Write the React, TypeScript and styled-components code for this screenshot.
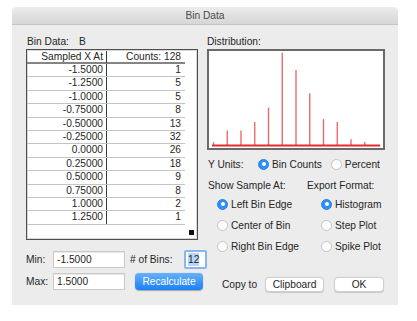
import React from "react";
import styled, { createGlobalStyle } from "styled-components";

const GlobalStyle = createGlobalStyle`
    body {
        margin: 0;
        background: #ffffff;
        font-family: "Liberation Sans", Arial, sans-serif;
        font-size: 10.2px;
        color: #262626;
    }
`;

const Page = styled.div`
    padding: 7px 0 0 12px;
`;

const Window = styled.div`
    width: 386px;
    height: 298px;
    background: #ececec;
    border-radius: 5px 5px 0 0;
    box-sizing: border-box;
    display: flex;
    flex-direction: column;
`;

const TitleBar = styled.div`
    height: 17px;
    flex: 0 0 17px;
    border-radius: 5px 5px 0 0;
    background: linear-gradient(#ececec, #d6d6d6);
    border-bottom: 1px solid #c4c4c4;
    display: flex;
    align-items: center;
    justify-content: center;
    color: #4a4a4a;
`;

const Body = styled.div`
    display: flex;
    padding: 10px 0 0 14px;
`;

const Column = styled.div<{ $width: number }>`
    width: ${(p) => p.$width}px;
    display: flex;
    flex-direction: column;
`;

const Label = styled.div<{ $gap?: number }>`
    height: 14px;
    line-height: 13px;
    margin-left: ${(p) => p.$gap ?? 1}px;
`;

const BinName = styled.span`
    margin-left: 10px;
`;

const Table = styled.div`
    width: 172px;
    height: 191px;
    box-sizing: border-box;
    border: 1px solid #4f4f4f;
    box-shadow: inset 0 0 0 1px #d8d8d8;
    background: #ffffff;
    position: relative;
`;

const Row = styled.div<{ $header?: boolean }>`
    display: grid;
    grid-template-columns: 80px 77px;
    height: ${(p) => (p.$header ? 11 : 12.4)}px;
    border-bottom: ${(p) => (p.$header ? "2px solid #858585" : "1px solid #c4c4c4")};
    width: 158px;
    padding-top: ${(p) => (p.$header ? 1 : 0)}px;
`;

const Cell = styled.div<{ $first?: boolean }>`
    text-align: right;
    padding-right: 3px;
    line-height: 12.4px;
    border-right: ${(p) => (p.$first ? "1px solid #3a3a3a" : "none")};
    white-space: nowrap;
`;

const Corner = styled.div`
    position: absolute;
    right: 3px;
    bottom: 4px;
    width: 5px;
    height: 5px;
    background: #111;
`;

const FormRow = styled.div<{ $top: number }>`
    display: flex;
    align-items: center;
    margin-top: ${(p) => p.$top}px;
    height: 18px;
`;

const FieldLabel = styled.span<{ $width: number; $left?: number }>`
    width: ${(p) => p.$width}px;
    margin-left: ${(p) => p.$left ?? 0}px;
    flex: none;
`;

const Input = styled.div<{ $width: number }>`
    width: ${(p) => p.$width}px;
    height: 17px;
    box-sizing: border-box;
    background: #fff;
    border: 1px solid #c9c9c9;
    box-shadow: inset 0 1px 0 #e8e8e8;
    padding-left: 3px;
    line-height: 15px;
    flex: none;
`;

const FocusInput = styled.div`
    width: 25px;
    height: 19px;
    box-sizing: border-box;
    margin-left: 7px;
    border: 2px solid #86b5ef;
    border-radius: 2px;
    background: #fff;
    padding: 1px 0 0 2px;
`;

const Selected = styled.span`
    background: #b5d5fd;
    line-height: 13px;
    display: inline-block;
`;

const BlueButton = styled.div`
    width: 68px;
    height: 17px;
    margin-left: 10px;
    border-radius: 4px;
    background: linear-gradient(#69b1fa, #1a7ff6);
    color: #fff;
    display: flex;
    align-items: center;
    justify-content: center;
    box-shadow: 0 0.5px 1px rgba(0, 0, 0, 0.3);
`;

const Button = styled.div<{ $width: number; $left?: number }>`
    width: ${(p) => p.$width}px;
    margin-left: ${(p) => p.$left ?? 0}px;
    height: 15px;
    box-sizing: border-box;
    border-radius: 4px;
    background: #fff;
    border: 1px solid #cfcfcf;
    box-shadow: 0 0.5px 1px rgba(0, 0, 0, 0.15);
    display: flex;
    align-items: center;
    justify-content: center;
`;

const Chart = styled.div`
    width: 178px;
    height: 101px;
    box-sizing: border-box;
    border: 2px solid #6a6a6a;
    background: #fff;
`;

const RadioRow = styled.div<{ $top: number }>`
    display: flex;
    align-items: center;
    height: 14px;
    margin-top: ${(p) => p.$top}px;
`;

const Radio = styled.span<{ $on?: boolean }>`
    width: 11px;
    height: 11px;
    box-sizing: border-box;
    border-radius: 50%;
    flex: none;
    margin-right: 3px;
    background: ${(p) => (p.$on ? "#2f8ff8" : "#fff")};
    border: 1px solid ${(p) => (p.$on ? "#2a84ee" : "#c2c2c2")};
    display: flex;
    align-items: center;
    justify-content: center;
    &::after {
        content: "";
        width: 4px;
        height: 4px;
        border-radius: 50%;
        background: ${(p) => (p.$on ? "#fff" : "transparent")};
    }
`;

const Option = styled.div<{ $left: number; $width?: number }>`
    display: flex;
    align-items: center;
    margin-left: ${(p) => p.$left}px;
    width: ${(p) => (p.$width ? `${p.$width}px` : "auto")};
    flex: none;
    white-space: nowrap;
`;

const rows: [string, number][] = [
    ["-1.5000", 1],
    ["-1.2500", 5],
    ["-1.0000", 5],
    ["-0.75000", 8],
    ["-0.50000", 13],
    ["-0.25000", 32],
    ["0.0000", 26],
    ["0.25000", 18],
    ["0.50000", 9],
    ["0.75000", 8],
    ["1.0000", 2],
    ["1.2500", 1],
];

const Histogram = () => (
    <svg width="174" height="97" viewBox="0 0 174 97">
        {rows.map(([, c], i) => {
            const x = 4.5 + i * 13.75;
            return <line key={i} x1={x} x2={x} y1={94} y2={94 - c * 2.88} stroke="#e7474a" strokeWidth="1.3" opacity="0.85" />;
        })}
        <line x1={3} x2={171} y1={94.5} y2={94.5} stroke="#e12b2f" strokeWidth="2" />
    </svg>
);

const App = () => (
    <Page>
        <GlobalStyle />
        <Window>
            <TitleBar>Bin Data</TitleBar>
            <Body>
                <Column $width={181}>
                    <Label>
                        Bin Data:<BinName>B</BinName>
                    </Label>
                    <Table>
                        <Row $header>
                            <Cell $first>Sampled X At</Cell>
                            <Cell>Counts: 128</Cell>
                        </Row>
                        {rows.map(([x, c]) => (
                            <Row key={x}>
                                <Cell $first>{x}</Cell>
                                <Cell>{c}</Cell>
                            </Row>
                        ))}
                        <Corner />
                    </Table>
                    <FormRow $top={10}>
                        <FieldLabel $width={27}>Min:</FieldLabel>
                        <Input $width={72}>-1.5000</Input>
                        <FieldLabel $width={47} $left={5}>
                            # of Bins:
                        </FieldLabel>
                        <FocusInput>
                            <Selected>12</Selected>
                        </FocusInput>
                    </FormRow>
                    <FormRow $top={4}>
                        <FieldLabel $width={27}>Max:</FieldLabel>
                        <Input $width={72}>1.5000</Input>
                        <BlueButton>Recalculate</BlueButton>
                    </FormRow>
                </Column>
                <Column $width={178}>
                    <Label $gap={0}>Distribution:</Label>
                    <Chart>
                        <Histogram />
                    </Chart>
                    <RadioRow $top={7}>
                        <Option $left={1} $width={50}>
                            Y Units:
                        </Option>
                        <Option $left={0}>
                            <Radio $on />
                            Bin Counts
                        </Option>
                        <Option $left={9}>
                            <Radio />
                            Percent
                        </Option>
                    </RadioRow>
                    <RadioRow $top={7}>
                        <Option $left={1} $width={99}>
                            Show Sample At:
                        </Option>
                        <Option $left={0}>Export Format:</Option>
                    </RadioRow>
                    <RadioRow $top={5}>
                        <Option $left={10} $width={99}>
                            <Radio $on />
                            Left Bin Edge
                        </Option>
                        <Option $left={5}>
                            <Radio $on />
                            Histogram
                        </Option>
                    </RadioRow>
                    <RadioRow $top={7}>
                        <Option $left={10} $width={99}>
                            <Radio />
                            Center of Bin
                        </Option>
                        <Option $left={5}>
                            <Radio />
                            Step Plot
                        </Option>
                    </RadioRow>
                    <RadioRow $top={7}>
                        <Option $left={10} $width={99}>
                            <Radio />
                            Right Bin Edge
                        </Option>
                        <Option $left={5}>
                            <Radio />
                            Spike Plot
                        </Option>
                    </RadioRow>
                    <FormRow $top={22}>
                        <Option $left={15} $width={43}>
                            Copy to
                        </Option>
                        <Button $width={59}>Clipboard</Button>
                        <Button $width={50} $left={10}>
                            OK
                        </Button>
                    </FormRow>
                </Column>
            </Body>
        </Window>
    </Page>
);

export default App;
